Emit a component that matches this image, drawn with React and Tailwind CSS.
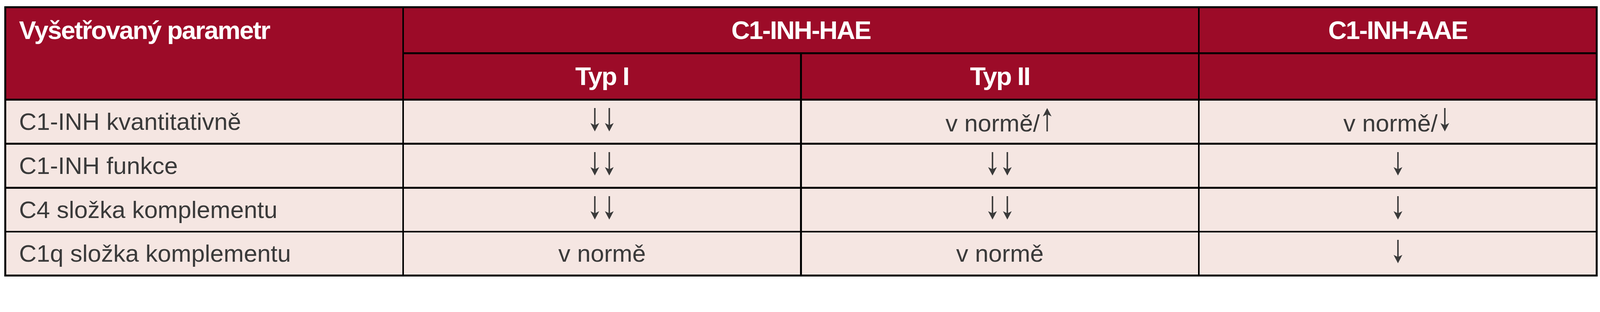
import React from 'react'

function Arrow({ up = false }) {
  return (
    <svg
      width="37.5"
      height="60"
      viewBox="0 0 40 64"
      className={`inline-block align-baseline ${up ? 'rotate-180' : ''}`}
      fill="currentColor"
    >
      <rect x="18" y="0" width="4" height="56" />
      <path d="M8 41 L20 64 L32 41 L20 47 Z" />
    </svg>
  )
}

function Down2() {
  return (
    <span className="inline-flex items-end">
      <Arrow />
      <Arrow />
    </span>
  )
}

function HeadCell({ children, className = '' }) {
  return (
    <div className={`bg-[#9c0b28] text-white font-bold text-[65.5px] tracking-[-2.2px] leading-none flex items-center justify-center ${className}`}>
      {children}
    </div>
  )
}

function Cell({ children, left = false }) {
  return (
    <div
      className={`bg-[#f5e6e2] text-[#3a3a3a] text-[62px] leading-none flex items-center ${
        left ? 'justify-start pl-[33px]' : 'justify-center'
      }`}
    >
      <span className="whitespace-nowrap">{children}</span>
    </div>
  )
}

const rows = [
  ['C1-INH kvantitativně', <Down2 />, <>v normě/<Arrow up /></>, <>v normě/<Arrow /></>],
  ['C1-INH funkce', <Down2 />, <Down2 />, <Arrow />],
  ['C4 složka komplementu', <Down2 />, <Down2 />, <Arrow />],
  ['C1q složka komplementu', 'v normě', 'v normě', <Arrow />],
]

export default function App() {
  return (
    <div
      className="w-full bg-white pl-[11px] pr-[6px] pt-[16px]"
      style={{ fontFamily: '"Liberation Sans", Arial, sans-serif' }}
    >
      <div className="w-full bg-black p-[4.7px] grid grid-cols-4 gap-[4.7px] grid-rows-[113.6px_114.5px_108px_108px_108px_108px]">
        {/* header */}
        <div className="row-span-2 bg-[#9c0b28] text-white font-bold text-[65.5px] tracking-[-2.2px] leading-none">
          <div className="h-[113.6px] flex items-center pl-[33px]">Vyšetřovaný parametr</div>
        </div>
        <HeadCell className="col-span-2">C1-INH-HAE</HeadCell>
        <HeadCell>C1-INH-AAE</HeadCell>
        <HeadCell>Typ I</HeadCell>
        <HeadCell>Typ II</HeadCell>
        <HeadCell />

        {/* body */}
        {rows.map((r, i) => (
          <React.Fragment key={i}>
            <Cell left>{r[0]}</Cell>
            <Cell>{r[1]}</Cell>
            <Cell>{r[2]}</Cell>
            <Cell>{r[3]}</Cell>
          </React.Fragment>
        ))}
      </div>
    </div>
  )
}
